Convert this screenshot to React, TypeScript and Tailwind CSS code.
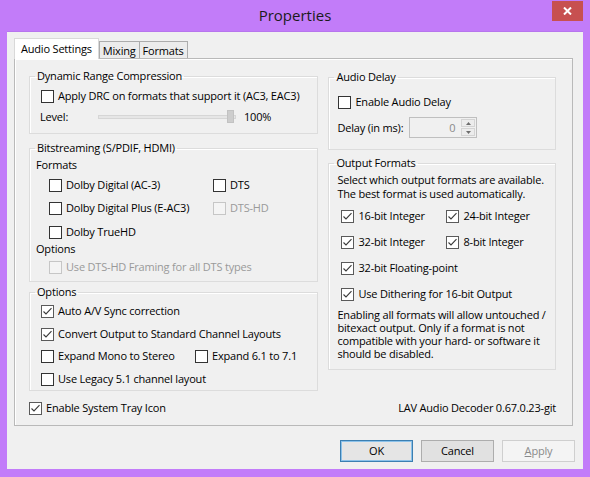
import React from "react";

type BoxProps = {
  label: string;
  checked?: boolean;
  disabled?: boolean;
  className?: string;
};

function CheckBox({ label, checked, disabled, className }: BoxProps) {
  return (
    <label className={"flex items-center gap-[4px] h-[16px] " + (className ?? "")}>
      <span
        className={
          "w-[13px] h-[13px] shrink-0 border flex items-center justify-center " +
          (disabled
            ? "border-[#c6c6c6] bg-[#f4f4f4]"
            : checked
              ? "border-[#5a5a5a] bg-white"
              : "border-[#333333] bg-white")
        }
      >
        {checked && (
          <svg width="11" height="11" viewBox="0 0 11 11">
            <path d="M1.5 5.5 L4 8 L9.5 2.2" fill="none" stroke="#3a3a3a" strokeWidth="1.1" />
          </svg>
        )}
      </span>
      <span className={disabled ? "text-[#9a9a9a]" : "text-black"}>{label}</span>
    </label>
  );
}

// group box: legend sits on the top border, padding goes on the body only
function Group({
  title,
  className,
  body,
  children,
}: {
  title: string;
  className?: string;
  body?: string;
  children: React.ReactNode;
}) {
  return (
    <fieldset className={"border border-[#dcdcdc] shadow-[inset_1px_1px_0_#ffffff] " + (className ?? "")}>
      <legend className="ml-[5px] px-[2px] leading-[14px]">{title}</legend>
      <div className={body}>{children}</div>
    </fieldset>
  );
}

function Tab({ label, active }: { label: string; active?: boolean }) {
  if (active) {
    return (
      <div className="relative z-10 h-[21px] px-[6px] pt-[2px] bg-white border border-b-0 border-[#d9d9d9]">
        {label}
      </div>
    );
  }
  return (
    <div className="h-[18px] px-[3px] pt-[1px] bg-[#ececec] border border-b-0 border-[#acacac] -ml-px first:ml-0">
      {label}
    </div>
  );
}

export default function App() {
  return (
    <div className="w-[590px] h-[477px] bg-[#c27cf9] flex flex-col text-[11px] tracking-[-0.19px] text-black font-['Open_Sans',sans-serif] leading-[16px]">
      {/* title bar */}
      <div className="relative h-[31px] flex items-center justify-center">
        <span className="text-[15px] tracking-normal text-[#1b1b1b] -mt-[1px]">Properties</span>
        <div className="absolute right-[7px] top-[1px] w-[31px] h-[20px] bg-[#c75050] flex items-center justify-center">
          <svg width="9" height="8" viewBox="0 0 9 8">
            <path d="M1 0.5 L8 7.5 M8 0.5 L1 7.5" stroke="#ffffff" strokeWidth="2" />
          </svg>
        </div>
      </div>

      {/* client area */}
      <div className="mx-[7px] h-[438px] bg-[#f0f0f0] border-t border-[#b775ee] px-[7px] pt-[6px] flex flex-col">
        <div className="flex items-end">
          <Tab label="Audio Settings" active />
          <div className="flex items-end">
            <Tab label="Mixing" />
            <Tab label="Formats" />
          </div>
        </div>

        <div className="w-[559px] h-[368px] -mt-px border border-[#b9b9b9] shadow-[inset_1px_1px_0_#ffffff] pl-[14px] pr-[16px] pt-[10px] flex flex-col">
          <div className="flex gap-[10px]">
            {/* left column */}
            <div className="w-[290px] flex flex-col">
              <Group title="Dynamic Range Compression" body="pl-[11px] pb-[8px]">
                <CheckBox label="Apply DRC on formats that support it (AC3, EAC3)" className="mt-[5px]" />
                <div className="mt-[5px] h-[16px] flex items-center">
                  <span className="w-[58px] -ml-[1px]">Level:</span>
                  <div className="relative w-[138px] h-[4px] bg-[#e6e6e6] border border-[#d6d6d6]">
                    <div className="absolute right-[1px] -top-[6px] w-[7px] h-[13px] bg-[#cdcdcd] border border-[#c2c2c2]" />
                  </div>
                  <span className="ml-[8px]">100%</span>
                </div>
              </Group>

              <Group title="Bitstreaming (S/PDIF, HDMI)" className="mt-[7px]" body="pl-[6px] pb-[6px]">
                <div className="mt-[2px] h-[16px]">Formats</div>
                <div className="ml-[13px] grid grid-cols-[164px_1fr]">
                  <CheckBox label="Dolby Digital (AC-3)" className="mt-[4px]" />
                  <CheckBox label="DTS" className="mt-[4px]" />
                  <CheckBox label="Dolby Digital Plus (E-AC3)" className="mt-[7px]" />
                  <CheckBox label="DTS-HD" disabled className="mt-[7px]" />
                  <CheckBox label="Dolby TrueHD" className="mt-[8px]" />
                </div>
                <div className="mt-[1px] h-[16px]">Options</div>
                <CheckBox label="Use DTS-HD Framing for all DTS types" disabled className="ml-[13px] mt-[2px]" />
              </Group>

              <Group title="Options" className="mt-[3px]" body="pl-[11px] pb-[3px]">
                <CheckBox label="Auto A/V Sync correction" checked className="mt-[4px]" />
                <CheckBox label="Convert Output to Standard Channel Layouts" checked className="mt-[7px]" />
                <div className="mt-[6px] grid grid-cols-[154px_1fr]">
                  <CheckBox label="Expand Mono to Stereo" />
                  <CheckBox label="Expand 6.1 to 7.1" />
                </div>
                <CheckBox label="Use Legacy 5.1 channel layout" className="mt-[7px]" />
              </Group>
            </div>

            {/* right column */}
            <div className="w-[228px] flex flex-col">
              <Group title="Audio Delay" className="mt-[1px]" body="pl-[9px] pb-[11px]">
                <CheckBox label="Enable Audio Delay" className="mt-[10px]" />
                <div className="mt-[7px] h-[21px] flex items-center">
                  <span className="w-[72px] -ml-[1px]">Delay (in ms):</span>
                  <div className="w-[68px] h-[21px] bg-[#f0f0f0] border border-[#bfbfbf] flex">
                    <span className="flex-1 text-right pr-[6px] text-[#8a8a8a] leading-[19px]">0</span>
                    <div className="w-[15px] flex flex-col gap-px py-px pr-px">
                      <div className="flex-1 border border-[#d4d4d4] bg-[#ececec] flex items-center justify-center">
                        <svg width="5" height="3" viewBox="0 0 5 3"><path d="M0 3 L2.5 0 L5 3Z" fill="#6d6d6d" /></svg>
                      </div>
                      <div className="flex-1 border border-[#d4d4d4] bg-[#ececec] flex items-center justify-center">
                        <svg width="5" height="3" viewBox="0 0 5 3"><path d="M0 0 L2.5 3 L5 0Z" fill="#6d6d6d" /></svg>
                      </div>
                    </div>
                  </div>
                </div>
              </Group>

              <Group title="Output Formats" className="mt-[6px]" body="pl-[8px] pb-[9px]">
                <p className="mt-[3px] leading-[14px]">
                  Select which output formats are available.
                  <br />
                  The best format is used automatically.
                </p>
                <div className="ml-[4px] mt-[7px] grid grid-cols-[105px_1fr] gap-y-[10px]">
                  <CheckBox label="16-bit Integer" checked />
                  <CheckBox label="24-bit Integer" checked />
                  <CheckBox label="32-bit Integer" checked />
                  <CheckBox label="8-bit Integer" checked />
                  <CheckBox label="32-bit Floating-point" checked className="col-span-2" />
                  <CheckBox label="Use Dithering for 16-bit Output" checked className="col-span-2" />
                </div>
                <p className="mt-[6px] leading-[13px]">
                  Enabling all formats will allow untouched /
                  <br />
                  bitexact output. Only if a format is not
                  <br />
                  compatible with your hard- or software it
                  <br />
                  should be disabled.
                </p>
              </Group>
            </div>
          </div>

          <div className="mt-[9px] flex items-center justify-between">
            <CheckBox label="Enable System Tray Icon" checked />
            <span>LAV Audio Decoder 0.67.0.23-git</span>
          </div>
        </div>

        {/* dialog buttons */}
        <div className="mt-[14px] flex justify-end gap-[8px] pr-[1px]">
          <button className="w-[73px] h-[22px] bg-[#e5e5e5] border border-[#3c7fb1] shadow-[inset_0_0_0_1px_#8cc2ea]">
            OK
          </button>
          <button className="w-[73px] h-[22px] bg-[#e1e1e1] border border-[#adadad]">Cancel</button>
          <button className="w-[73px] h-[22px] bg-[#f4f4f4] border border-[#cfcfcf] text-[#8a8a8a]">
            <span className="underline">A</span>pply
          </button>
        </div>
      </div>
    </div>
  );
}
